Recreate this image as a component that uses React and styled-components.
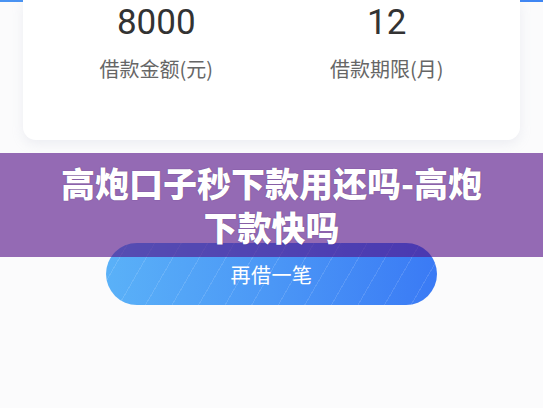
import React from 'react';
import styled, { createGlobalStyle } from 'styled-components';

const GlobalStyle = createGlobalStyle`
  html, body {
    margin: 0;
    padding: 0;
    background: #fbfbfc;
    font-family: Roboto, "Noto Sans CJK SC", sans-serif;
  }
`;

const stats = [
  { value: '8000', label: '借款金额(元)' },
  { value: '12', label: '借款期限(月)' },
];

export default function App() {
  return (
    <Page>
      <GlobalStyle />
      <TopBar />
      <Card>
        {stats.map((s) => (
          <Stat key={s.label}>
            <Value>{s.value}</Value>
            <Label>{s.label}</Label>
          </Stat>
        ))}
      </Card>

      <Banner>高炮口子秒下款用还吗-高炮下款快吗</Banner>

      <ButtonRow>
        <AgainButton>再借一笔</AgainButton>
      </ButtonRow>
    </Page>
  );
}

const Page = styled.div`
  width: 543px;
  height: 408px;
  overflow: hidden;
  position: relative;
  background: #fbfbfc;
`;

const TopBar = styled.div`
  height: 2px;
  background: linear-gradient(90deg, #4a93f2, #3f86f3);
`;

const Card = styled.div`
  position: relative;
  z-index: 1;
  margin: -2px 23px 0;
  height: 140px;
  box-sizing: border-box;
  padding: 2px 18px 0;
  display: grid;
  grid-template-columns: 1fr 1fr;
  background: #fff;
  border-radius: 0 0 13px 13px;
  box-shadow: 0 4px 12px rgba(170, 180, 200, 0.18);
`;

const Stat = styled.div`
  display: flex;
  flex-direction: column;
  align-items: center;
`;

const Value = styled.div`
  font-family: Roboto, sans-serif;
  font-size: 35px;
  line-height: 42px;
  color: #333;
`;

const Label = styled.div`
  margin-top: 12px;
  font-family: "Noto Sans CJK SC", sans-serif;
  font-size: 20px;
  line-height: 26px;
  color: #666;
`;

const Banner = styled.div`
  position: relative;
  z-index: 3;
  margin-top: 13px;
  height: 104px;
  box-sizing: border-box;
  padding: 8px 50px;
  background: rgba(84, 16, 136, 0.62);
  color: #fff;
  text-align: center;
  font-family: "Noto Sans CJK SC", sans-serif;
  font-weight: 900;
  font-size: 34px;
  line-height: 44px;
  text-shadow: 0 0 1px rgba(40, 10, 70, 0.6);
`;

const ButtonRow = styled.div`
  display: flex;
  justify-content: center;
  margin-top: -14px;
`;

const AgainButton = styled.button`
  position: relative;
  z-index: 2;
  width: 331px;
  height: 62px;
  border: 0;
  border-radius: 31px;
  background:
    repeating-linear-gradient(
      -60deg,
      rgba(255, 255, 255, 0) 0 22px,
      rgba(255, 255, 255, 0.12) 22px 23px
    ),
    linear-gradient(90deg, #5ab1f8 0%, #4b97f6 50%, #3a7af5 100%);
  color: #fff;
  font-family: "Noto Sans CJK SC", sans-serif;
  font-size: 20px;
  letter-spacing: 0.5px;
  padding: 0;
`;
